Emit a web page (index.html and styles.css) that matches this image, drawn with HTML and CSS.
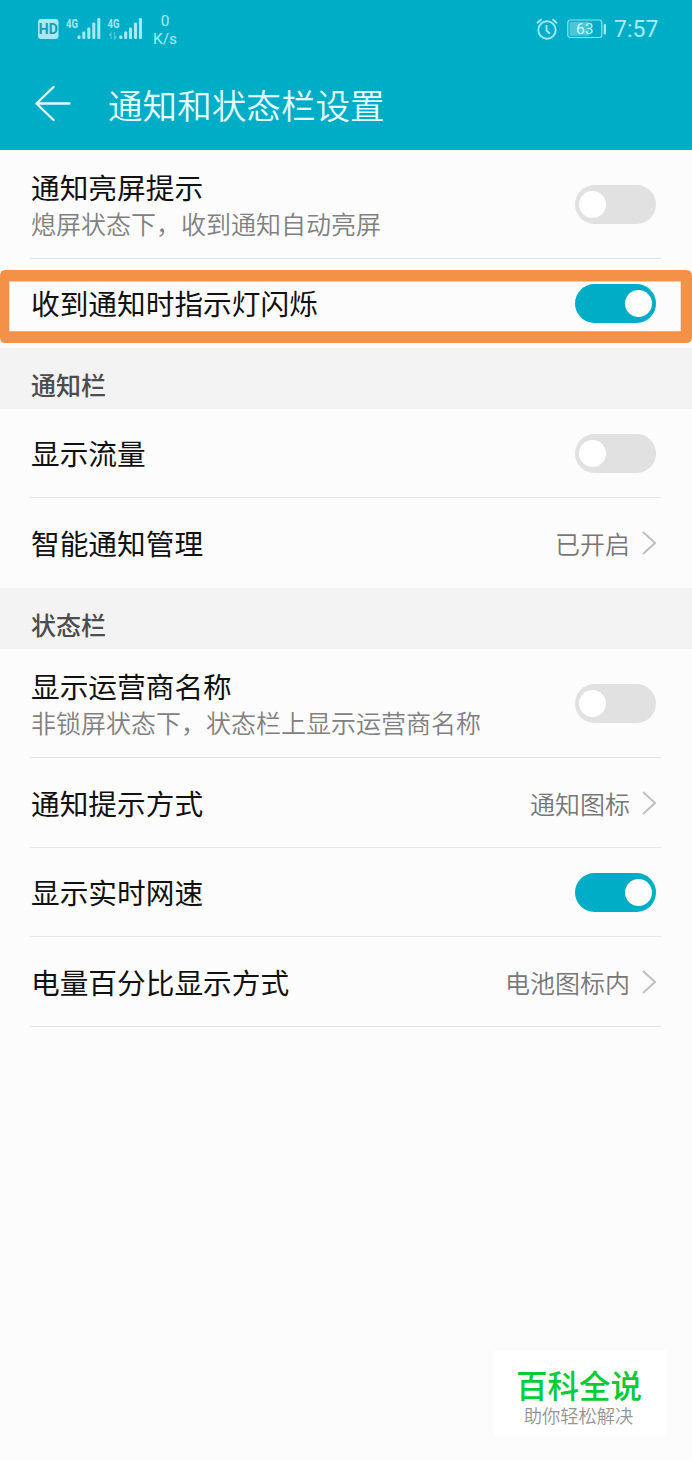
FILE: index.html
```html
<!DOCTYPE html>
<html lang="zh-CN">
<head>
<meta charset="utf-8">
<title>通知和状态栏设置</title>
<link rel="stylesheet" href="styles.css">
</head>
<body>
<header class="header">
  <div class="statusbar">
    <svg class="status-left" width="112" height="40" viewBox="0 0 112 40" aria-hidden="true">
      <rect x="2" y="9" width="20.500" height="20" rx="3" fill="#a5e9f3"/>
      <text x="12.300" y="24" text-anchor="middle" class="hd">HD</text>
      <text x="30" y="17.500" class="gen" textLength="12" lengthAdjust="spacingAndGlyphs">4G</text>
      <g fill="#a5e9f3">
        <rect x="41.500" y="25.500" width="3" height="3.500" rx="1"/><rect x="46.300" y="21.500" width="3" height="7.500" rx="1"/><rect x="51.300" y="17.500" width="3" height="11.500" rx="1"/><rect x="56.300" y="12.500" width="3" height="16.500" rx="1"/><rect x="61.300" y="8" width="3" height="21" rx="1"/>
        <rect x="83.300" y="25.500" width="3" height="3.500" rx="1"/><rect x="88.200" y="21.500" width="3" height="7.500" rx="1"/><rect x="93" y="17.500" width="3" height="11.500" rx="1"/><rect x="98" y="12.500" width="3" height="16.500" rx="1"/><rect x="103" y="8" width="3" height="21" rx="1"/>
      </g>
      <text x="71.500" y="17.500" class="gen" textLength="12" lengthAdjust="spacingAndGlyphs">4G</text>
      <path d="M75 29V23L73 25.500M78.500 22V29L80.500 26.500" fill="none" stroke="#4cc7d8" stroke-width="1.300"/>
    </svg>
    <div class="speed"><span>0</span><span>K/s</span></div>
    <div class="status-right">
      <svg width="22" height="24" viewBox="0 0 22 24" fill="none" stroke="#a0eaf5" stroke-width="1.900" aria-hidden="true">
        <circle cx="11" cy="13" r="8.700"/><path d="M10.500 8V13.500L14 16.800M1 6.200L5.500 2.300M16.500 2.300L21 6.200"/>
      </svg>
      <svg class="battery" width="40" height="20" viewBox="0 0 40 20" aria-hidden="true">
        <rect x=".8" y="1" width="34" height="17.500" rx="2.500" fill="none" stroke="#8ce2ee" stroke-width="1.200"/>
        <rect x="2.500" y="2.800" width="20" height="14" fill="#4cc5d7"/>
        <rect x="36.700" y="5" width="2.300" height="10.500" rx=".8" fill="#a0eaf5"/>
        <text x="17.800" y="15.300" text-anchor="middle" class="level">63</text>
      </svg>
      <span class="clock">7:57</span>
    </div>
  </div>
  <div class="titlebar">
    <svg width="36" height="36" viewBox="0 0 36 36" fill="none" stroke="#dffcff" stroke-width="2.300" stroke-linecap="round" stroke-linejoin="round" aria-hidden="true"><path d="M34.500 17.500H1.500M18.500 1L1.500 17.500L18.500 34"/></svg>
    <h1 class="title">通知和状态栏设置</h1>
  </div>
</header>
<main>
  <div class="row tall"><div><div class="label">通知亮屏提示</div><div class="sub">熄屏状态下，收到通知自动亮屏</div></div><span class="toggle"></span></div>
  <div class="row marked"><div class="label">收到通知时指示灯闪烁</div><span class="toggle on"></span><svg class="marker" width="692" height="73" viewBox="0 0 692 73" aria-hidden="true"><path fill="#f39149" fill-rule="evenodd" d="M6 0H686Q692 0 692 6V67Q692 73 686 73H5Q0 73 0 67V6Q0 0 5 0ZM9.300 11.500V61.300H680.700V11.500Z"/></svg></div>
  <h2 class="section">通知栏</h2>
  <div class="row short"><div class="label">显示流量</div><span class="toggle"></span></div>
  <div class="row last"><div class="label">智能通知管理</div><div class="value">已开启<svg class="chevron" viewBox="0 0 14 24"><path d="M1 1L13 12L1 23"/></svg></div></div>
  <h2 class="section">状态栏</h2>
  <div class="row tall"><div><div class="label">显示运营商名称</div><div class="sub">非锁屏状态下，状态栏上显示运营商名称</div></div><span class="toggle"></span></div>
  <div class="row"><div class="label">通知提示方式</div><div class="value">通知图标<svg class="chevron" viewBox="0 0 14 24"><path d="M1 1L13 12L1 23"/></svg></div></div>
  <div class="row short"><div class="label">显示实时网速</div><span class="toggle on"></span></div>
  <div class="row"><div class="label">电量百分比显示方式</div><div class="value">电池图标内<svg class="chevron" viewBox="0 0 14 24"><path d="M1 1L13 12L1 23"/></svg></div></div>
</main>
<aside class="brand"><div class="brand-name">百科全说</div><div class="brand-tag">助你轻松解决</div></aside>
</body>
</html>
```
FILE: styles.css
```css
* { box-sizing: border-box; }
body {
  margin: 0;
  min-height: 1460px;
  background: #fcfcfc;
  font-family: "Noto Sans CJK SC", sans-serif;
  color: #111;
  position: relative;
}
.header { height: 150px; background: #00adc6; }
.statusbar {
  height: 60px;
  padding: 10px 33px 0 36px;
  display: flex;
  align-items: flex-start;
  font-family: Roboto, sans-serif;
  color: #a5edf6;
}
.status-left { flex: none; }
.hd { font: 700 14px Roboto, sans-serif; fill: #159eb2; }
.gen { font: 700 12px Roboto, sans-serif; fill: #a5e9f3; }
.level { font: 400 15.500px Roboto, sans-serif; fill: #c8f8fd; }
.speed {
  display: flex;
  flex-direction: column;
  align-items: center;
  width: 34px;
  padding-top: 2px;
  font-size: 15.500px;
  line-height: 18px;
}
.status-right { margin-left: auto; display: flex; align-items: center; padding-top: 6px; height: 32px; }
.battery { margin: 0 7px 0 9px; }
.clock { font-size: 23px; line-height: 26px; padding-top: 2px; font-weight: 400; width: 45px; white-space: nowrap; }
.titlebar { height: 90px; padding: 0 35px 2px; display: flex; align-items: center; gap: 37px; }
.title { margin: 0; font-size: 34.600px; line-height: 50px; font-weight: 350; color: #e6fdff; }
.row {
  margin: 0 31px 0 30px;
  padding: 0 5px 0 1px;
  height: 90px;
  border-bottom: 1px solid #e6e6e6;
  display: flex;
  align-items: center;
  justify-content: space-between;
  position: relative;
}
.tall { height: 109px; }
.short { height: 89px; }
.marked, .last { border-bottom: 0; }
.marked { height: 89px; padding-bottom: 1px; }
.label { font-size: 28.700px; line-height: 36px; font-weight: 400; white-space: nowrap; }
.tall .label { padding-top: 1px; }
.sub { font-size: 25px; line-height: 36px; font-weight: 350; color: #808080; white-space: nowrap; }
.value { display: flex; align-items: center; gap: 12px; font-size: 25px; line-height: 36px; font-weight: 350; color: #777; }
.chevron { width: 14px; height: 24px; fill: none; stroke: #c0c0c0; stroke-width: 2; }
.toggle {
  width: 81px;
  height: 39px;
  border-radius: 20px;
  background: #e1e1e1;
  padding: 6px 4px;
  display: flex;
}
.toggle::before { content: ""; width: 27px; height: 27px; border-radius: 50%; background: #fff; }
.toggle.on { background: #00adc6; justify-content: flex-end; }
.marker { position: absolute; left: -30px; top: 11px; }
.section {
  margin: 0;
  height: 61px;
  padding: 17px 31px 0;
  background: #f3f3f3;
  font-size: 25px;
  line-height: 38px;
  font-weight: 500;
  color: #4c4c4c;
}
.brand {
  position: absolute;
  left: 494px;
  top: 1350px;
  width: 173px;
  height: 86px;
  padding-top: 14px;
  background: #fff;
  text-align: center;
  white-space: nowrap;
}
.brand-name { font-size: 31.500px; line-height: 40px; font-weight: 500; color: #0acb36; padding-right: 3px; }
.brand-tag { font-size: 18.300px; line-height: 22px; color: #949494; font-weight: 350; padding-right: 4px; }
```
